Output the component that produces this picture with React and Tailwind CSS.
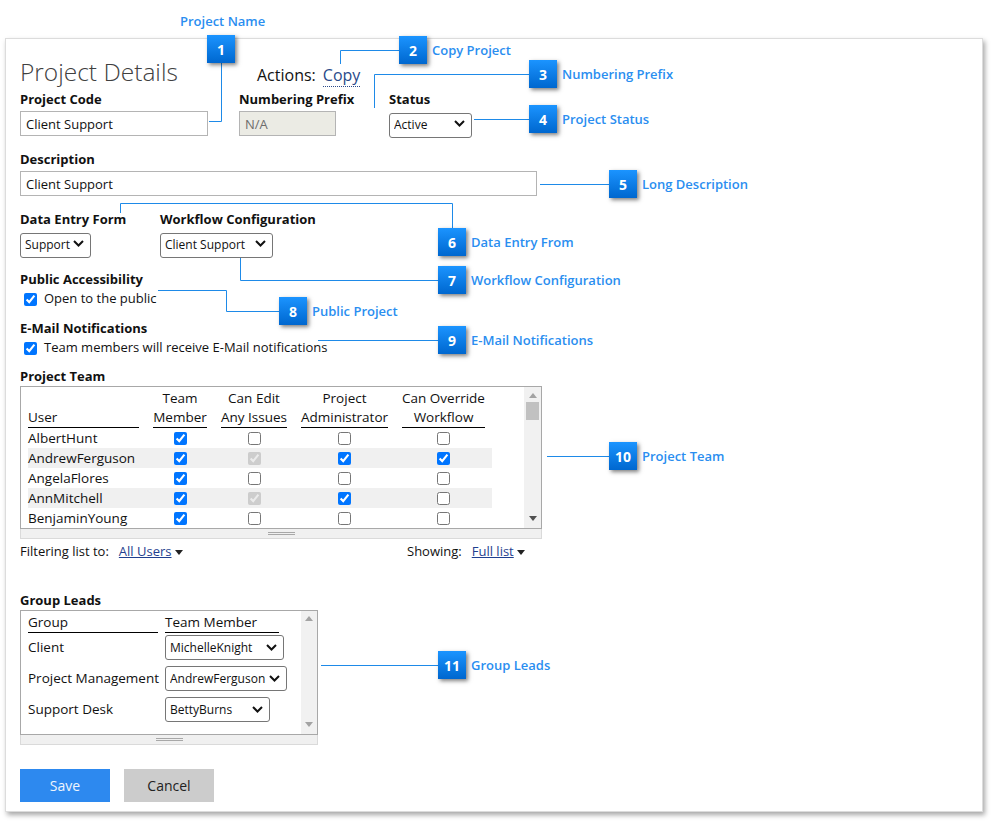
import React from 'react';

const team = [
  ['AlbertHunt', [1, 0, 0, 0]],
  ['AndrewFerguson', [1, 'd', 1, 1]],
  ['AngelaFlores', [1, 0, 0, 0]],
  ['AnnMitchell', [1, 'd', 1, 0]],
  ['BenjaminYoung', [1, 0, 0, 0]],
];

const leads = [
  ['Client', 'MichelleKnight', 'w-[119px]'],
  ['Project Management', 'AndrewFerguson', 'w-[122px]'],
  ['Support Desk', 'BettyBurns', 'w-[105px]'],
];

const callouts = [
  { n: 1, pos: 'left-[207px] top-[35px]' },
  { n: 2, pos: 'left-[399px] top-[36px]', label: 'Copy Project' },
  { n: 3, pos: 'left-[529px] top-[60px]', label: 'Numbering Prefix' },
  { n: 4, pos: 'left-[529px] top-[105px]', label: 'Project Status' },
  { n: 5, pos: 'left-[609px] top-[170px]', label: 'Long Description' },
  { n: 6, pos: 'left-[438px] top-[228px]', label: 'Data Entry From' },
  { n: 7, pos: 'left-[438px] top-[266px]', label: 'Workflow Configuration' },
  { n: 8, pos: 'left-[279px] top-[297px]', label: 'Public Project' },
  { n: 9, pos: 'left-[438px] top-[326px]', label: 'E-Mail Notifications' },
  { n: 10, pos: 'left-[609px] top-[442px]', label: 'Project Team' },
  { n: 11, pos: 'left-[438px] top-[651px]', label: 'Group Leads' },
];

function Chevron() {
  return (
    <svg width="11" height="7" viewBox="0 0 11 7" className="pointer-events-none absolute right-[7px] top-[9px]">
      <path d="M1 1l4.5 4.5L10 1" fill="none" stroke="#111" strokeWidth="2" />
    </svg>
  );
}

function Select({ value, w }) {
  return (
    <div className={`relative h-[25px] ${w}`}>
      <select
        defaultValue={value}
        className="h-full w-full appearance-none rounded-[3px] border border-[#767676] bg-white pl-[4px] text-[12px] text-[#111] outline-none"
      >
        <option>{value}</option>
      </select>
      <Chevron />
    </div>
  );
}

function Label({ children, className = '' }) {
  return <div className={`text-[13px] font-bold leading-[17px] text-[#111] ${className}`}>{children}</div>;
}

function Box({ v }) {
  return (
    <input
      type="checkbox"
      defaultChecked={v !== 0}
      disabled={v === 'd'}
      className="m-0 h-[13px] w-[13px]"
    />
  );
}

function Caret() {
  return (
    <svg width="8" height="5" viewBox="0 0 8 5" className="ml-[3px]">
      <path d="M0 0h8L4 5z" fill="#222" />
    </svg>
  );
}

function Grip() {
  return (
    <div className="flex h-[10px] items-center justify-center border-x border-b border-[#dadada] bg-[#f0f0f0]">
      <div className="flex w-[27px] flex-col gap-[1px]">
        <div className="h-px bg-[#a8a8a8]" />
        <div className="h-px bg-[#a8a8a8]" />
      </div>
    </div>
  );
}

function Arrow({ up, color }) {
  return (
    <svg width="8" height="5" viewBox="0 0 8 5">
      <path d={up ? 'M0 5h8L4 0z' : 'M0 0h8L4 5z'} fill={color} />
    </svg>
  );
}

export default function App() {
  return (
    <div className="relative h-[822px] w-[991px] overflow-hidden bg-white pl-[5px] pt-[38px] font-['Open_Sans',sans-serif] text-[#111]">
      <div className="h-[774px] w-[978px] border border-[#dcdcdc] pl-[14px] pt-[17px] shadow-[2px_3px_5px_rgba(0,0,0,0.35)]">
        {/* Title + actions */}
        <div className="flex h-[32px] items-baseline">
          <h1 className="w-[237px] text-[24.5px] font-light leading-[32px] text-[#404040]">Project Details</h1>
          <div className="text-[16px] leading-[20px] text-[#111]">
            Actions:
            <span className="ml-[7px] border-b border-dotted border-[#2a4a8a] text-[#2a4a8a]">Copy</span>
          </div>
        </div>

        {/* Code / prefix / status */}
        <div className="mt-[3px] flex">
          <div className="w-[219px]">
            <Label>Project Code</Label>
            <input
              defaultValue="Client Support"
              className="mt-[3px] h-[25px] w-[188px] border border-[#b4b4b4] px-[5px] text-[13px] outline-none"
            />
          </div>
          <div className="w-[150px]">
            <Label>Numbering Prefix</Label>
            <input
              defaultValue="N/A"
              disabled
              className="mt-[3px] h-[25px] w-[97px] border border-[#b4b4b4] bg-[#ebebe4] px-[5px] text-[13px] text-[#6d6d6d]"
            />
          </div>
          <div>
            <Label>Status</Label>
            <div className="mt-[3px]">
              <Select value="Active" w="w-[83px]" />
            </div>
          </div>
        </div>

        {/* Description */}
        <Label className="mt-[15px]">Description</Label>
        <input
          defaultValue="Client Support"
          className="mt-[3px] h-[25px] w-[517px] border border-[#b4b4b4] px-[5px] text-[13px] outline-none"
        />

        {/* Form / workflow */}
        <div className="mt-[15px] flex">
          <div className="w-[140px]">
            <Label>Data Entry Form</Label>
            <div className="mt-[3px]">
              <Select value="Support" w="w-[71px]" />
            </div>
          </div>
          <div>
            <Label>Workflow Configuration</Label>
            <div className="mt-[3px]">
              <Select value="Client Support" w="w-[113px]" />
            </div>
          </div>
        </div>

        {/* Public */}
        <Label className="mt-[15px]">Public Accessibility</Label>
        <label className="mt-[2px] flex h-[18px] items-center pl-[4px] text-[13px]">
          <Box v={1} />
          <span className="ml-[7px]">Open to the public</span>
        </label>

        {/* Email */}
        <Label className="mt-[12px]">E-Mail Notifications</Label>
        <label className="mt-[2px] flex h-[18px] items-center pl-[4px] text-[13px]">
          <Box v={1} />
          <span className="ml-[7px]">Team members will receive E-Mail notifications</span>
        </label>

        {/* Project team */}
        <Label className="mt-[11px]">Project Team</Label>
        <div className="mt-[1px] w-[522px]">
          <div className="flex h-[143px] border border-[#a8a8a8]">
            <div className="flex-1 overflow-hidden pl-[7px] pt-[2px] text-[13.5px]">
              <div className="grid w-[464px] grid-cols-[111px_54px_66px_87px_83px] items-end gap-x-[14px] whitespace-nowrap leading-[19px]">
                <div className="border-b border-black">User</div>
                <div className="flex flex-col items-center border-b border-black"><span>Team</span><span>Member</span></div>
                <div className="flex flex-col items-center border-b border-black"><span>Can Edit</span><span>Any Issues</span></div>
                <div className="flex flex-col items-center border-b border-black"><span>Project</span><span>Administrator</span></div>
                <div className="flex flex-col items-center border-b border-black"><span>Can Override</span><span>Workflow</span></div>
              </div>
              {team.map(([name, flags], i) => (
                <div
                  key={name}
                  className={`grid h-[20px] w-[464px] grid-cols-[111px_54px_66px_87px_83px] items-center gap-x-[14px] ${i % 2 === 1 ? 'bg-[#f0f0f0]' : ''}`}
                >
                  <div className="leading-[20px]">{name}</div>
                  {flags.map((f, j) => (
                    <div key={j} className="flex justify-center">
                      <Box v={f} />
                    </div>
                  ))}
                </div>
              ))}
            </div>
            <div className="flex w-[17px] flex-col items-center bg-[#f1f1f1]">
              <div className="mt-[6px]">
                <Arrow up color="#a3a3a3" />
              </div>
              <div className="mt-[4px] h-[18px] w-[13px] bg-[#c1c1c1]" />
              <div className="mt-auto mb-[7px]">
                <Arrow color="#505050" />
              </div>
            </div>
          </div>
          <Grip />
        </div>

        {/* Filter row */}
        <div className="mt-[4px] flex h-[18px] items-center text-[13px]">
          <div className="flex w-[387px] items-center">
            <span>Filtering list to:</span>
            <span className="ml-[10px] text-[#1f3f8f] underline">All Users</span>
            <Caret />
          </div>
          <span>Showing:</span>
          <span className="ml-[10px] text-[#1f3f8f] underline">Full list</span>
          <Caret />
        </div>

        {/* Group leads */}
        <Label className="mt-[31px]">Group Leads</Label>
        <div className="mt-[1px] w-[298px]">
          <div className="flex h-[125px] border border-[#a8a8a8]">
            <div className="flex-1 pl-[7px] pt-[2px] text-[13.5px]">
              <div className="flex leading-[19px]">
                <div className="w-[130px] border-b border-black">Group</div>
                <div className="ml-[7px] w-[114px] border-b border-black">Team Member</div>
              </div>
              <div className="flex flex-col gap-[6px] pt-[2px]">
                {leads.map(([g, m, w]) => (
                  <div key={g} className="flex h-[25px] items-center">
                    <div className="w-[137px] whitespace-nowrap">{g}</div>
                    <Select value={m} w={w} />
                  </div>
                ))}
              </div>
            </div>
            <div className="flex w-[16px] flex-col items-center bg-[#f1f1f1]">
              <div className="mt-[5px]">
                <Arrow up color="#a3a3a3" />
              </div>
              <div className="mt-auto mb-[7px]">
                <Arrow color="#a3a3a3" />
              </div>
            </div>
          </div>
          <Grip />
        </div>

        {/* Buttons */}
        <div className="mt-[24px] flex gap-[14px] text-[14px]">
          <button className="h-[33px] w-[90px] bg-[#2d89ef] text-[#eef5fd]">Save</button>
          <button className="h-[33px] w-[90px] bg-[#cccccc] text-[#222]">Cancel</button>
        </div>
      </div>

      {/* Callout overlay */}
      <svg width="991" height="822" className="pointer-events-none absolute left-0 top-0" fill="none" stroke="#1e8ae8" strokeWidth="1">
        <path d="M221.5 63V121.5H209" />
        <path d="M399 50.5H340.5V64" />
        <path d="M529 74.5H374.5V108" />
        <path d="M474 119.5H529" />
        <path d="M540 184.5H609" />
        <path d="M120.5 213V203.5H452.5V228" />
        <path d="M240.5 258V280.5H438" />
        <path d="M158 290.5H226.5V311.5H279" />
        <path d="M318 340.5H438" />
        <path d="M547 456.5H609" />
        <path d="M321 665.5H438" />
      </svg>
      <div className="absolute left-[180px] top-[12px] text-[13px] font-semibold leading-[18px] text-[#2a8ef0]">Project Name</div>
      {callouts.map((c) => (
        <div key={c.n} className={`absolute flex items-center gap-[5px] ${c.pos}`}>
          <div className="flex h-[28px] w-[28px] items-center justify-center bg-gradient-to-b from-[#1b94ff] to-[#0067cf] text-[14px] font-bold text-white shadow-[2px_2px_4px_rgba(0,0,0,0.5)]">
            {c.n}
          </div>
          {c.label && <div className="text-[13px] font-semibold leading-[18px] text-[#2a8ef0]">{c.label}</div>}
        </div>
      ))}
    </div>
  );
}
